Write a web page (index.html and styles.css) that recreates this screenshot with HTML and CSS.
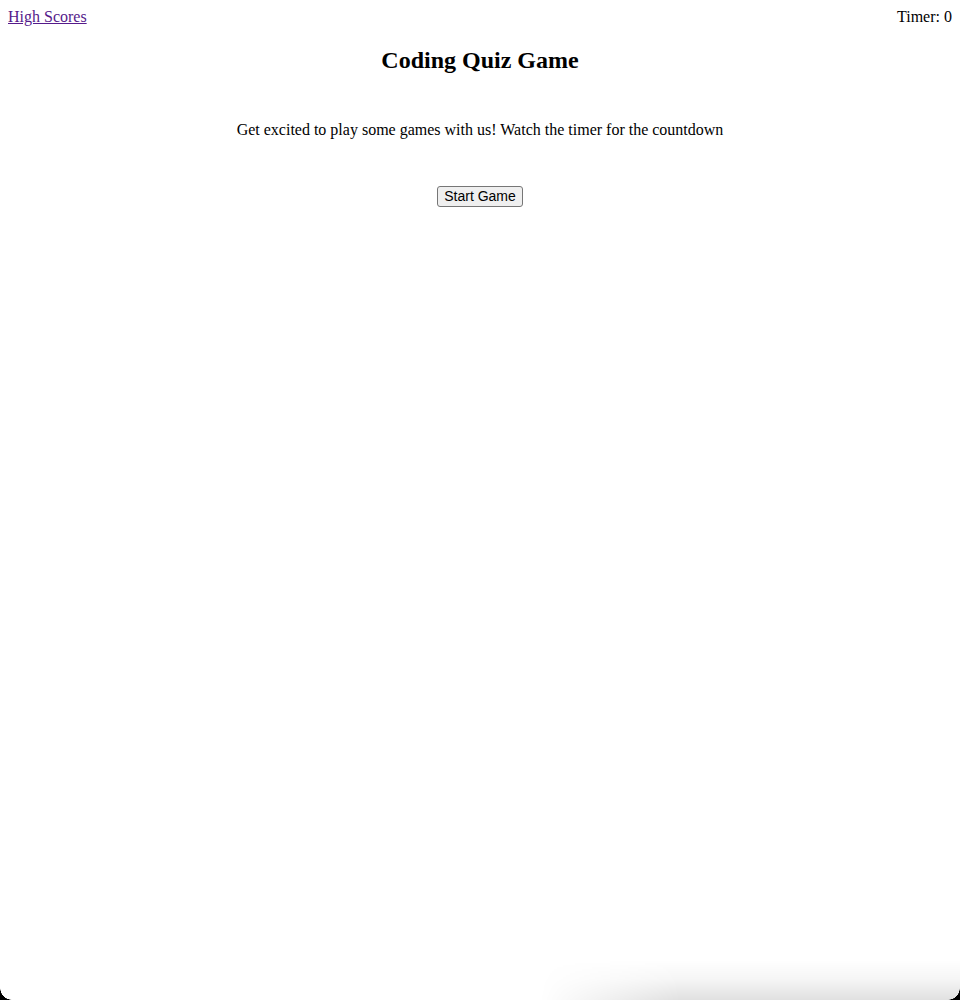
FILE: index.html
```html
<!DOCTYPE html>
<html lang="en">
<head>
<meta charset="utf-8">
<title>Coding Quiz Game</title>
<link rel="stylesheet" href="styles.css">
</head>
<body>
<header class="top-bar">
  <a class="scores-link" href="#">High Scores</a>
  <span class="timer">Timer: 0</span>
</header>
<main class="intro">
  <h1 class="title">Coding Quiz Game</h1>
  <p class="lead">Get excited to play some games with us! Watch the timer for the countdown</p>
  <button class="start-btn" type="button">Start Game</button>
</main>
<div class="frame-shadow" aria-hidden="true"></div>
<div class="corner corner-left" aria-hidden="true"></div>
<div class="corner corner-right" aria-hidden="true"></div>
</body>
</html>
```
FILE: styles.css
```css
html, body {
  height: 100%;
}
body {
  margin: 8px;
  font-family: "Liberation Serif", "Times New Roman", serif;
  font-size: 16px;
  color: #000;
  background: #fff;
}
.top-bar {
  display: flex;
  justify-content: space-between;
  align-items: baseline;
  line-height: 18px;
}
.scores-link {
  color: #551a8b;
}
.timer {
  color: #000;
}
.intro {
  display: flex;
  flex-direction: column;
  align-items: center;
  text-align: center;
}
.title {
  font-size: 24px;
  font-weight: bold;
  margin: 20px 0 0;
  line-height: 28px;
}
.lead {
  margin: 47px 0 0;
  line-height: 18px;
  font-size: 16px;
}
.start-btn {
  margin-top: 47px;
  font-family: "Liberation Sans", Arial, sans-serif;
  font-size: 14px;
  padding: 0 6px;
  height: 21px;
  line-height: 19px;
  background: #efefef;
  border: 1px solid #767676;
  border-radius: 3px;
  color: #000;
}
.frame-shadow {
  position: fixed;
  left: 540px;
  right: 0;
  bottom: 0;
  height: 40px;
  background: linear-gradient(to bottom, rgba(0,0,0,0) 0%, rgba(0,0,0,0.04) 50%, rgba(0,0,0,0.12) 100%);
  -webkit-mask-image: linear-gradient(to right, transparent 0, #000 140px);
  mask-image: linear-gradient(to right, transparent 0, #000 140px);
  pointer-events: none;
}
.corner {
  position: fixed;
  bottom: 0;
  width: 12px;
  height: 12px;
  pointer-events: none;
}
.corner-left {
  left: 0;
  background: radial-gradient(circle at 12px 0, transparent 11.5px, #000 12px);
}
.corner-right {
  right: 0;
  background: radial-gradient(circle at 0 0, transparent 11.5px, #000 12px);
}
```
